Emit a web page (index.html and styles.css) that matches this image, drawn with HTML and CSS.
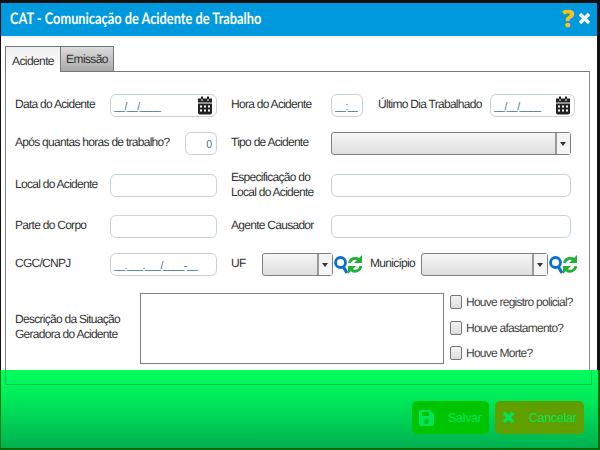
FILE: index.html
```html
<!DOCTYPE html>
<html>
<head>
  <meta charset="UTF-8">
  <title>CAT - Comunicação de Acidente de Trabalho</title>
  <link rel="stylesheet" href="styles.css">
</head>
<body>
<svg class="defs" width="0" height="0">
  <symbol id="cal" viewBox="0 0 14 18">
    <path fill="#222" d="M3 0h2v3H3zM9 0h2v3H9zM0 2h3v2h2V2h4v2h2V2h3v4H0zM0 7h14v9a2 2 0 0 1-2 2H2a2 2 0 0 1-2-2zM2 9v2h2V9zm4 0v2h2V9zm4 0v2h2V9zM2 13v2h2v-2zm4 0v2h2v-2zm4 0v2h2v-2z"/>
  </symbol>
  <symbol id="search" viewBox="0 0 28 22">
    <circle cx="6.500" cy="8.500" r="5" fill="none" stroke="#0a6fd0" stroke-width="2.800"/>
    <path d="M9.500 13l3.500 6" stroke="#0a6fd0" stroke-width="3.200" fill="none"/>
    <path d="M15.500 9a6 6 0 0 1 9.500-3.500" stroke="#22b03a" stroke-width="2.800" fill="none"/>
    <path d="M28 1v8h-8z" fill="#22b03a"/>
    <path d="M27 12a6 6 0 0 1-9.500 4" stroke="#22b03a" stroke-width="2.800" fill="none"/>
    <path d="M14 20v-8h8z" fill="#22b03a"/>
  </symbol>
</svg>

<div class="window">
  <div class="titlebar">
    <span class="title"><span class="title-text">CAT - Comunicação de Acidente de Trabalho</span></span>
    <span class="help">?</span>
    <svg class="close" width="13" height="13" viewBox="0 0 13 13"><path d="M2 2l9 9M11 2l-9 9" stroke="#fff" stroke-width="3.400"/></svg>
  </div>

  <div class="tabs">
    <div class="tab active">Acidente</div>
    <div class="tab">Emissão</div>
  </div>

  <div class="panel">
    <div class="row">
      <label class="lbl w95">Data do Acidente</label>
      <div class="field w107"><input class="mask" value="__/__/____"><svg class="cal"><use href="#cal"/></svg></div>
      <label class="lbl w100 ml14">Hora do Acidente</label>
      <div class="field w32"><input class="mask" value="__:__"></div>
      <label class="lbl w112 ml15">Último Dia Trabalhado</label>
      <div class="field w85"><input class="mask" value="__/__/____"><svg class="cal"><use href="#cal"/></svg></div>
    </div>
    <div class="row">
      <label class="lbl w170">Após quantas horas de trabalho?</label>
      <div class="field w32"><input class="mask num" value="0"></div>
      <label class="lbl w100 ml14">Tipo de Acidente</label>
      <div class="combo w240"><span class="combo-btn"></span></div>
    </div>
    <div class="row">
      <label class="lbl w95">Local do Acidente</label>
      <div class="field w107"><input></div>
      <label class="lbl w100 ml14">Especificação do Local do Acidente</label>
      <div class="field w240"><input></div>
    </div>
    <div class="row">
      <label class="lbl w95">Parte do Corpo</label>
      <div class="field w107"><input></div>
      <label class="lbl w100 ml14">Agente Causador</label>
      <div class="field w240"><input></div>
    </div>
    <div class="row">
      <label class="lbl w95">CGC/CNPJ</label>
      <div class="field w107"><input class="mask" value="__.___.___/____-__"></div>
      <label class="lbl w31 ml14">UF</label>
      <div class="combo w71"><span class="combo-btn"></span></div>
      <svg class="lookup"><use href="#search"/></svg>
      <label class="lbl w51 ml8">Município</label>
      <div class="combo w127"><span class="combo-btn"></span></div>
      <svg class="lookup"><use href="#search"/></svg>
    </div>
    <div class="row top">
      <label class="lbl w125 desc">Descrição da Situação Geradora do Acidente</label>
      <textarea class="area"></textarea>
      <div class="checks">
        <label class="check"><input type="checkbox">Houve registro policial?</label>
        <label class="check"><input type="checkbox">Houve afastamento?</label>
        <label class="check"><input type="checkbox">Houve Morte?</label>
      </div>
    </div>
  </div>
</div>

<!-- barra verde por cima do modal -->
<div class="shade">
  <button class="btn save">
    <svg width="15" height="16" viewBox="0 0 15 16"><path fill="#00e45c" d="M0 2a2 2 0 0 1 2-2h9l4 4v10a2 2 0 0 1-2 2H2a2 2 0 0 1-2-2zM3 2v4h7V2zm4.500 7a2.500 2.500 0 1 0 0 5 2.500 2.500 0 0 0 0-5z"/></svg>
    Salvar
  </button>
  <button class="btn cancel">
    <svg width="13" height="13" viewBox="0 0 13 13"><path d="M2 2l9 9M11 2l-9 9" stroke="#00e45c" stroke-width="3.600"/></svg>
    Cancelar
  </button>
</div>
</body>
</html>
```

FILE: styles.css
```css
* {
  box-sizing: border-box;
}
html, body {
  margin: 0;
  height: 450px;
  overflow: hidden;
}
body {
  background-color: #111;
  font-family: "Liberation Sans", Arial, sans-serif;
  font-size: 12px;
  color: #333;
  text-rendering: geometricPrecision;
}
.defs {
  display: block;
  height: 0;
}
.window {
  height: 450px;
  margin: 3px 3px 0 1px;
  background-color: #fff;
}

/* title */
.titlebar {
  display: flex;
  align-items: center;
  height: 33px;
  padding: 0 6px 2px 9px;
  background-color: #0099dd;
  box-shadow: 0 2px 0 #f2f2f2;
}
.title {
  flex: 1;
  font-family: Lato, sans-serif;
  font-size: 16px;
  font-weight: 700;
  color: #fff;
}
.title-text {
  display: inline-block;
  transform: scaleX(0.8);
  transform-origin: left;
}
.help {
  margin-right: 4px;
  font-family: "Open Sans", sans-serif;
  font-size: 24px;
  font-weight: 800;
  line-height: 1;
  color: #ffc20e;
}

/* tabs */
.tabs {
  display: flex;
  height: 25px;
  margin: 10px 0 0 4px;
}
.tab {
  width: 54px;
  padding-top: 5px;
  border: 1px solid #777;
  border-bottom: 0;
  background: linear-gradient(#dcdcdc, #a9a9a9);
  letter-spacing: -0.6px;
  text-align: center;
}
.tab.active {
  width: 55px;
  position: relative;
  z-index: 1;
  height: 26px;
  padding-top: 7px;
  border-right: 0;
  background: linear-gradient(#f0f0f0, #fff);
}

.panel {
  display: grid;
  grid-template-rows: 38px 42px 41px 38px 40px 71px;
  width: 585px;
  height: 313px;
  margin-left: 4px;
  padding: 22px 0 0 9px;
  border: 1px solid #888;
  border-top: 1px solid #777;
}
.row {
  display: flex;
  align-items: center;
  height: 23px;
}
.row.top {
  align-items: flex-start;
}

.lbl {
  flex: none;
  padding-bottom: 2px;
  line-height: 15px;
  letter-spacing: -0.72px;
}
.desc {
  margin-top: 19px;
  padding-bottom: 0;
}

/* widths */
.w31 { width: 31px; }
.w32 { width: 32px; }
.w51 { width: 51px; }
.w71 { width: 71px; }
.w85 { width: 85px; }
.w95 { width: 95px; }
.w100 { width: 100px; }
.w107 { width: 107px; }
.w112 { width: 112px; }
.w125 { width: 125px; }
.w127 { width: 127px; }
.w170 { width: 170px; }
.w240 { width: 240px; }
.ml8 { margin-left: 8px; }
.ml14 { margin-left: 14px; }
.ml15 { margin-left: 15px; }

.field {
  flex: none;
  display: flex;
  align-items: center;
  height: 23px;
  padding: 0 4px 0 3px;
  border: 1px solid #c6d2da;
  border-radius: 6px;
  background-color: #fff;
}
.field input {
  flex: 1;
  min-width: 0;
  width: 100%;
  padding: 0;
  border: 0;
  outline: 0;
  background: transparent;
  font-family: "Liberation Sans", Arial, sans-serif;
  font-size: 10.5px;
  color: #3f6f90;
}
.mask {
  letter-spacing: -0.6px;
}
.num {
  text-align: right;
  letter-spacing: 0;
}
.cal {
  flex: none;
  width: 14px;
  height: 19px;
}

.combo {
  flex: none;
  display: flex;
  justify-content: flex-end;
  height: 23px;
  border: 1px solid #808080;
  border-radius: 3px;
  background: linear-gradient(#f6f6f6, #dedede);
}
.combo-btn {
  position: relative;
  width: 15px;
  border-left: 2px solid #999;
  background-color: #f4f4f4;
}
.combo-btn::after {
  content: "";
  position: absolute;
  top: 9px;
  left: 3px;
  border: 3.5px solid transparent;
  border-top: 4px solid #333;
  border-bottom: 0;
}

.lookup {
  flex: none;
  width: 28px;
  height: 22px;
  margin-left: 1px;
}

.area {
  flex: none;
  width: 304px;
  height: 71px;
  margin: 0;
  border: 1px solid #808080;
  outline: 0;
  resize: none;
}
.checks {
  display: flex;
  flex-direction: column;
  gap: 11.5px;
  margin: 2px 0 0 6px;
}
.check {
  display: flex;
  align-items: center;
  height: 14px;
  letter-spacing: -0.75px;
  color: #444;
}
.check input {
  appearance: none;
  flex: none;
  width: 12px;
  height: 14px;
  margin: 0 4px 0 0;
  border: 1px solid #777;
  border-radius: 2px;
  background: linear-gradient(#f4f4f4, #dcdcdc);
}

/* green strip */
.shade {
  position: absolute;
  left: 0;
  top: 370px;
  width: 600px;
  height: 80px;
  display: flex;
  justify-content: flex-end;
  align-items: flex-start;
  gap: 6px;
  padding: 31px 14px 0 0;
  border-left: 1px solid #0a7a0a;
  border-right: 2px solid #0a6a0a;
  border-bottom: 2px solid #0a6a0a;
  background: linear-gradient(#00ff5e, #00e85a 40%, #00b050);
}
/* resto do painel aparecendo por baixo */
.shade::before {
  content: "";
  position: absolute;
  left: 4px;
  top: 0;
  width: 585px;
  height: 14px;
  border: 1px solid rgba(0, 90, 30, 0.3);
  border-top: 0;
}
.btn {
  position: relative;
  display: flex;
  align-items: center;
  height: 33px;
  padding: 0 0 0 7px;
  border: 0;
  border-radius: 5px;
  font-family: "Liberation Sans", Arial, sans-serif;
  font-size: 12.5px;
  letter-spacing: -0.3px;
  color: #00e45c;
}
.btn svg {
  margin-right: 14px;
}
.save {
  width: 77px;
  background-color: #00c400;
}
.cancel {
  width: 89px;
  background-color: #5fa000;
}
```
